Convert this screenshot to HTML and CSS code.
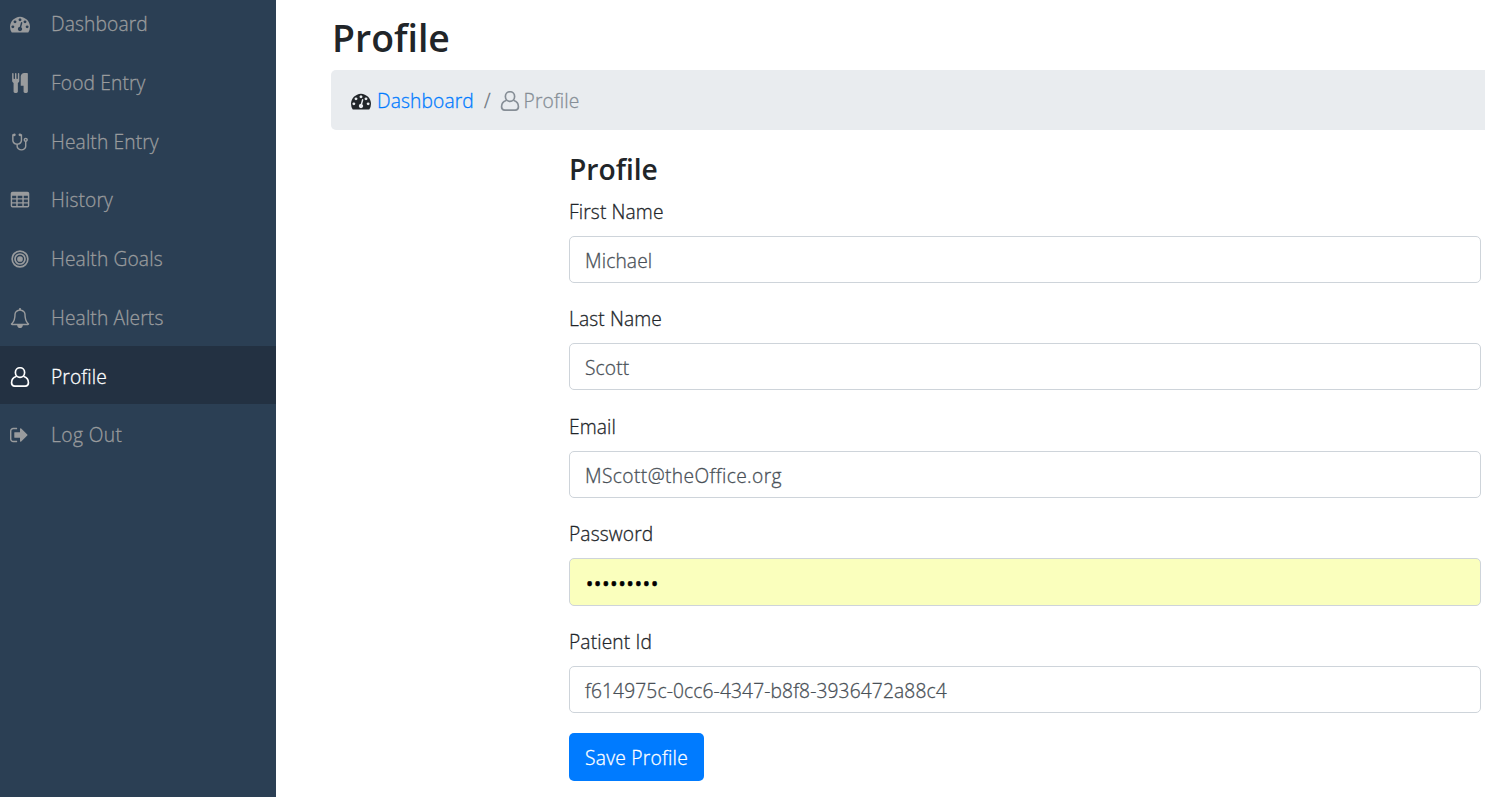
FILE: index.html
```html
<!DOCTYPE html>
<html lang="en">
<head>
<meta charset="utf-8">
<title>Profile</title>
<link rel="stylesheet" href="styles.css">
</head>
<body>
<svg class="defs" aria-hidden="true">
  <symbol id="gauge" viewBox="0 0 1792 1792"><path d="M384 1152q0-53-37.5-90.5t-90.5-37.5-90.5 37.5-37.5 90.5 37.5 90.5 90.5 37.5 90.5-37.5 37.5-90.5zm192-448q0-53-37.5-90.5t-90.5-37.5-90.5 37.5-37.5 90.5 37.5 90.5 90.5 37.5 90.5-37.5 37.5-90.5zm428 481l101-382q6-26-7.5-48.5t-38.5-29.5-48 6.5-30 39.5l-101 382q-60 5-107 43.5t-63 98.5q-20 77 20 146t117 89 146-20 89-117q16-60-6-117t-72-91zm660-33q0-53-37.5-90.5t-90.5-37.5-90.5 37.5-37.5 90.5 37.5 90.5 90.5 37.5 90.5-37.5 37.5-90.5zm-640-640q0-53-37.5-90.5t-90.5-37.5-90.5 37.5-37.5 90.5 37.5 90.5 90.5 37.5 90.5-37.5 37.5-90.5zm448 192q0-53-37.5-90.5t-90.5-37.5-90.5 37.5-37.5 90.5 37.5 90.5 90.5 37.5 90.5-37.5 37.5-90.5zm320 448q0 261-141 483-19 29-54 29h-1402q-35 0-54-29-141-221-141-483 0-182 71-348t191-286 286-191 348-71 348 71 286 191 191 286 71 348z"/></symbol>
  <symbol id="user" viewBox="0 0 1792 1792"><path fill="none" stroke="currentColor" stroke-width="150" d="M560 850C380 900 140 1070 140 1410Q140 1708 420 1708H1372Q1652 1708 1652 1410C1652 1070 1412 900 1232 850M1310 500A414 436 0 0 1 482 500A414 436 0 0 1 1310 500z"/></symbol>
</svg>
<div class="page">
  <nav class="sidebar">
    <a class="item"><svg class="icon"><use href="#gauge"/></svg><span>Dashboard</span></a>
    <a class="item"><svg class="icon" viewBox="0 0 1792 1792"><path d="M832 64v640q0 61-35.5 111t-92.5 70v779q0 52-38 90t-90 38h-128q-52 0-90-38t-38-90v-779q-57-20-92.5-70t-35.5-111v-640q0-26 19-45t45-19 45 19 19 45v416q0 26 19 45t45 19 45-19 19-45v-416q0-26 19-45t45-19 45 19 19 45v416q0 26 19 45t45 19 45-19 19-45v-416q0-26 19-45t45-19 45 19 19 45zm768 0v1600q0 52-38 90t-90 38h-128q-52 0-90-38t-38-90v-512h-224q-13 0-22.5-9.5t-9.5-22.5v-800q0-132 94-226t226-94h256q26 0 45 19t19 45z"/></svg><span>Food Entry</span></a>
    <a class="item"><svg class="icon" viewBox="0 0 1792 1792"><path d="M1472 704q0-26-19-45t-45-19-45 19-19 45 19 45 45 19 45-19 19-45zm128 0q0 62-35.5 111t-92.5 70v395q0 159-131.5 271.5t-316.5 112.5-316.5-112.5-131.5-271.5v-132q-164-20-274-128t-110-252v-512q0-26 19-45t45-19q6 0 16 2 17-30 47-48t65-18q53 0 90.5 37.5t37.5 90.5-37.5 90.5-90.5 37.5q-33 0-64-18v402q0 106 94 181t226 75 226-75 94-181v-402q-31 18-64 18-53 0-90.5-37.5t-37.5-90.5 37.5-90.5 90.5-37.5q35 0 65 18t47 48q10-2 16-2 26 0 45 19t19 45v512q0 144-110 252t-274 128v132q0 106 94 181t226 75 226-75 94-181v-395q-57-21-92.5-70t-35.5-111q0-80 56-136t136-56 136 56 56 136z"/></svg><span>Health Entry</span></a>
    <a class="item"><svg class="icon" viewBox="0 0 1792 1792"><path fill-rule="evenodd" d="M224 160H1568Q1728 160 1728 320V1408Q1728 1568 1568 1568H224Q64 1568 64 1408V320Q64 160 224 160zM192 512V736H560V512zM688 512V736H1104V512zM1232 512V736H1600V512zM192 848V1088H560V848zM688 848V1088H1104V848zM1232 848V1088H1600V848zM192 1200V1408Q192 1440 224 1440H560V1200zM688 1200V1440H1104V1200zM1232 1200V1440H1568Q1600 1440 1600 1408V1200z"/></svg><span>History</span></a>
    <a class="item"><svg class="icon" viewBox="0 0 1792 1792"><circle cx="896" cy="896" r="256"/><g fill="none" stroke="currentColor" stroke-width="150"><circle cx="896" cy="896" r="448"/><circle cx="896" cy="896" r="704"/></g></svg><span>Health Goals</span></a>
    <a class="item"><svg class="icon" viewBox="0 0 1792 1792"><path d="M246 1408h1300q-266-300-266-832 0-51-24-105t-69-103-121.5-80.5-169.5-31.5-169.5 31.5-121.5 80.5-69 103-24 105q0 532-266 832zm1482 0q0 52-38 90t-90 38h-448q0 106-75 181t-181 75-181-75-75-181h-448q-52 0-90-38t-38-90q50-42 91-88t85-119.5 74.5-158.5 50-206 19.5-260q0-152 117-282.5t307-158.5q-8-19-8-39 0-40 28-68t68-28 68 28 28 68q0 20-8 39 190 28 307 158.5t117 282.5q0 139 19.5 260t50 206 74.5 158.5 85 119.5 91 88z"/></svg><span>Health Alerts</span></a>
    <a class="item active"><svg class="icon"><use href="#user"/></svg><span>Profile</span></a>
    <a class="item"><svg class="icon" viewBox="64 0 1792 1792"><path d="M704 1440q0 4 1 20t.5 26.5-3 23.5-10 19.5-20.5 6.5h-320q-119 0-203.5-84.5t-84.5-203.5v-704q0-119 84.5-203.5t203.5-84.5h320q13 0 22.5 9.5t9.5 22.5q0 4 1 20t.5 26.5-3 23.5-10 19.5-20.5 6.5h-320q-66 0-113 47t-47 113v704q0 66 47 113t113 47h312l11.5 1 11.5 3 8 5.5 7 9 2 13.5zm928-544q0 26-19 45l-544 544q-19 19-45 19t-45-19-19-45v-288h-448q-26 0-45-19t-19-45v-384q0-26 19-45t45-19h448v-288q0-26 19-45t45-19 45 19l544 544q19 19 19 45z"/></svg><span class="wide">Log Out</span></a>
  </nav>
  <main class="content">
    <h1 class="title">Profile</h1>
    <div class="crumbs"><svg class="icon"><use href="#gauge"/></svg><a class="link">Dashboard</a><span class="slash">/</span><svg class="icon user"><use href="#user"/></svg><span class="here">Profile</span></div>
    <form class="form">
      <h2 class="subtitle">Profile</h2>
      <div class="field"><label class="label">First Name</label><div class="input">Michael</div></div>
      <div class="field"><label class="label">Last Name</label><div class="input">Scott</div></div>
      <div class="field"><label class="label">Email</label><div class="input email">MScott@theOffice.org</div></div>
      <div class="field"><label class="label">Password</label><div class="input filled">•••••••••</div></div>
      <div class="field"><label class="label">Patient Id</label><div class="input">f614975c-0cc6-4347-b8f8-3936472a88c4</div></div>
      <button class="save" type="button">Save Profile</button>
    </form>
  </main>
</div>
</body>
</html>
```
FILE: styles.css
```css
* { box-sizing: border-box; }
body {
  margin: 0;
  overflow: hidden;
  background: #fff;
  color: #212529;
  font: 300 19.2px/30px "Open Sans", "Noto Sans", sans-serif;
  letter-spacing: .13px;
  -webkit-text-stroke: .3px;
}
.defs { display: none; }
.page { display: flex; width: 1485px; height: 797px; overflow: hidden; }
.sidebar { flex: none; width: 276px; height: 797px; background: #2b3f54; overflow: hidden; }
.item {
  display: flex;
  align-items: center;
  gap: 21px;
  height: 58.7px;
  padding: 2.6px 0 0 10px;
  color: #999b9d;
}
.item:first-child { margin-top: -6.4px; }
.active { padding-top: 4px; background: #233142; color: #fff; }
.wide { letter-spacing: .4px; }
.icon { flex: none; width: 20px; height: 20px; fill: currentColor; }
.content { flex: 1; min-width: 0; padding-left: 55px; }
.title, .subtitle { margin: 0; font-weight: 600; letter-spacing: 0; -webkit-text-stroke: 0; }
.title { padding: 14px 0 0 1px; height: 70px; font-size: 37.4px; line-height: 47px; }
.crumbs { display: flex; align-items: center; height: 60px; padding: 1px 0 0 20px; border-radius: 5px 0 0 5px; background: #e9ecef; }
.link { margin-left: 6px; color: #007bff; }
.slash { margin: 0 9px 0 10px; color: #6c757d; }
.crumbs .user { color: #868e96; }
.here { margin-left: 4px; color: #868e96; }
.form { width: 912px; margin-left: 238px; }
.subtitle { padding-top: 21px; height: 66.6px; font-size: 28.2px; line-height: 36px; }
.field { height: 107.5px; }
.label { display: block; height: 39px; line-height: 30px; }
.input { display: flex; align-items: center; height: 47.3px; padding: 3px 15px 0; border: 1px solid #ced4da; border-radius: 5px; color: #495057; }
.email { letter-spacing: .4px; }
.filled { height: 48px; padding-left: 16px; background: #faffbd; color: #000; font-weight: 400; letter-spacing: .9px; -webkit-text-stroke: .6px; }
.save { display: block; width: 135px; height: 48px; margin: -1px 0 0; padding: 2px 0 0; border: 0; border-radius: 5px; background: #007bff; color: #fff; font: inherit; letter-spacing: .25px; }
```
